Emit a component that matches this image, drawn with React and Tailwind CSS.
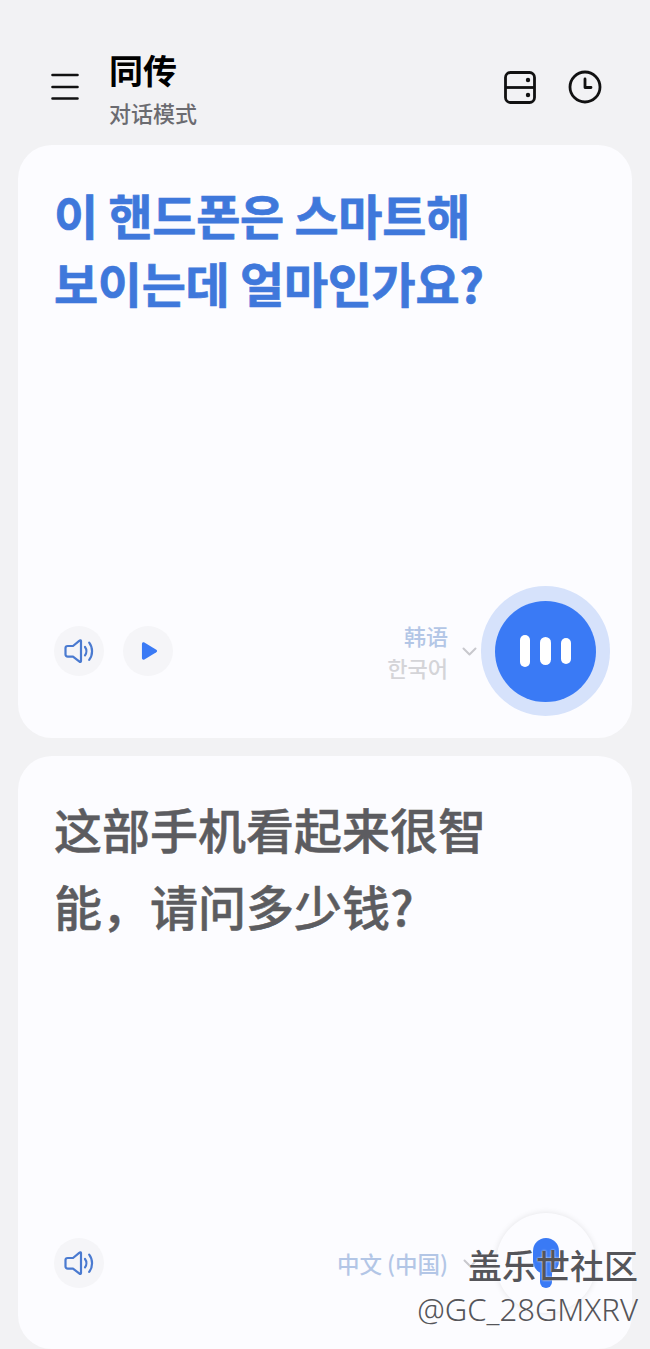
import React from "react";

const CJK_SC = "font-['Noto_Sans_CJK_SC','Noto_Sans',sans-serif]";
const CJK_KR = "font-['Noto_Sans_CJK_KR','Noto_Sans_CJK_SC',sans-serif]";

function SpeakerIcon() {
  return (
    <svg width="30" height="26" viewBox="0 0 30 26" fill="none" stroke="#4a7ad0" strokeWidth="2.2" strokeLinecap="round" strokeLinejoin="round">
      <path d="M17 3 L17 23 C17 24 16.100 24.200 15.500 23.700 L9 18.600 L3.800 18.600 C2.300 18.600 1.500 17.700 1.500 16.400 L1.500 10 C1.500 8.800 2.300 8 3.800 8 L9 8 L15.500 2.600 C16.100 2 17 2.200 17 3 Z" />
      <path d="M21 9 C22.800 11.400 22.800 15 21 17.400" />
      <path d="M25.200 4.600 C29 9.500 29 17 25.200 21.900" />
    </svg>
  );
}

function RoundBtn({ children }) {
  return (
    <div className="w-[50px] h-[50px] rounded-full bg-[#f5f5f8] flex items-center justify-center">
      {children}
    </div>
  );
}

function Header() {
  return (
    <header className="h-[145px] flex items-start pl-[51px] pr-[48px] pt-[48px]">
      <svg className="mt-[25px] shrink-0" width="28" height="27" viewBox="0 0 28 27" stroke="#111" strokeWidth="2.6" strokeLinecap="round">
        <path d="M1.5 2h25M1.5 14h25M1.5 25.500h25" />
      </svg>
      <div className={`ml-[30px] ${CJK_SC}`}>
        <div className="text-[34px] leading-[44px] font-bold text-black">同传</div>
        <div className="text-[22px] leading-[32px] mt-[4px] font-medium text-[#6b6b70]">对话模式</div>
      </div>
      <div className="ml-auto flex items-center gap-[32px] mt-[22px]">
        <svg width="32" height="33" viewBox="0 0 32 33" fill="none" stroke="#111" strokeWidth="2.8">
          <rect x="1.500" y="1.500" width="29" height="30" rx="5" />
          <path d="M1.500 16.500h29" />
          <circle cx="24" cy="9" r="2.200" fill="#111" stroke="none" />
          <circle cx="24" cy="24" r="2.200" fill="#111" stroke="none" />
        </svg>
        <svg width="34" height="34" viewBox="0 0 34 34" fill="none" stroke="#111" strokeWidth="2.800" strokeLinecap="round" strokeLinejoin="round">
          <circle cx="17" cy="17" r="15" />
          <path d="M17 9v8.500h6" />
        </svg>
      </div>
    </header>
  );
}

export default function App() {
  return (
    <div className="relative w-[650px] h-[1349px] overflow-hidden bg-[#f2f2f4]">
      <Header />
      <div className="px-[18px] flex flex-col gap-[18px]">
        <section className="h-[593px] rounded-[34px] bg-[#fcfcff] flex flex-col pl-[36px] pr-[22px] pt-[35px] pb-[22px]">
          <p className={`${CJK_KR} text-[48px] leading-[68px] font-bold text-[#3f78db] tracking-[-0.3px] [-webkit-text-stroke:0.7px_#3f78db]`}>
            이 핸드폰은 스마트해
            <br />
            보이는데 얼마인가요?
          </p>
          <div className="mt-auto flex items-center">
            <div className="flex gap-[19px]">
              <RoundBtn><SpeakerIcon /></RoundBtn>
              <RoundBtn>
                <svg className="ml-[3px]" width="17" height="20" viewBox="0 0 18 20" fill="#3a7af5">
                  <path d="M1 2.500 C1 1 2.400 .3 3.600 1 L16.200 8.600 C17.300 9.300 17.300 10.700 16.200 11.400 L3.600 19 C2.400 19.700 1 19 1 17.500 Z" />
                </svg>
              </RoundBtn>
            </div>
            <div className="ml-auto flex items-center">
              <div className={`${CJK_SC} text-right text-[22px] leading-[32px] font-medium`}>
                <div className="text-[#b3c6e6]">韩语</div>
                <div className={`${CJK_KR} text-[#d4d4d8]`}>한국어</div>
              </div>
              <svg className="ml-[14px] mr-[4px]" width="15" height="9" viewBox="0 0 15 9" fill="none" stroke="#c8c8cd" strokeWidth="2" strokeLinecap="round" strokeLinejoin="round">
                <path d="M1.500 1.500 L7.500 7.500 L13.500 1.500" />
              </svg>
              <div className="w-[129px] h-[130px] rounded-full bg-[#d6e2fb] flex items-center justify-center">
                <div className="w-[101px] h-[101px] rounded-full bg-[#3a7af5] flex items-center justify-center gap-[10px]">
                  <span className="w-[10.500px] h-[32px] rounded-full bg-white" />
                  <span className="w-[10.500px] h-[28px] rounded-full bg-white" />
                  <span className="w-[10.500px] h-[26px] rounded-full bg-white" />
                </div>
              </div>
            </div>
          </div>
        </section>
        <section className="h-[593px] rounded-[34px] bg-[#fcfcff] flex flex-col pl-[36px] pr-[36px] pt-[34px] pb-[36px]">
          <p className={`${CJK_SC} text-[48px] leading-[77px] font-medium text-[#5c5c60] [-webkit-text-stroke:0.5px_#5c5c60]`}>
            这部手机看起来很智
            <br />
            能，请问多少钱?
          </p>
          <div className="mt-auto flex items-center">
            <RoundBtn><SpeakerIcon /></RoundBtn>
            <div className="ml-auto flex items-center">
              <span className={`${CJK_SC} text-[22.500px] leading-[32px] font-medium text-[#b3c6e6]`}>中文 (中国)</span>
              <svg className="ml-[15px] mr-[18px]" width="15" height="9" viewBox="0 0 15 9" fill="none" stroke="#c8c8cd" strokeWidth="2" strokeLinecap="round" strokeLinejoin="round">
                <path d="M1.500 1.500 L7.500 7.500 L13.500 1.500" />
              </svg>
              <div className="w-[100px] h-[100px] rounded-full bg-[#fcfcff] shadow-[0_0_6px_rgba(0,0,0,0.10)] flex items-center justify-center">
                <svg width="26" height="50" viewBox="0 0 26 50" fill="#3a7af5">
                  <rect x="0" y="0" width="26" height="36" rx="13" />
                  <rect x="7" y="26" width="12" height="24" rx="6" />
                </svg>
              </div>
            </div>
          </div>
        </section>
      </div>
      <div className={`absolute right-[12px] top-[1243px] text-right ${CJK_SC} text-[#55555a] [text-shadow:0_0_2px_#fff]`}>
        <div className="text-[34px] leading-[44px] font-medium">盖乐世社区</div>
        <div className="font-['Noto_Sans',sans-serif] font-light text-[31px] leading-[40px] mt-[2px]">@GC_28GMXRV</div>
      </div>
    </div>
  );
}
